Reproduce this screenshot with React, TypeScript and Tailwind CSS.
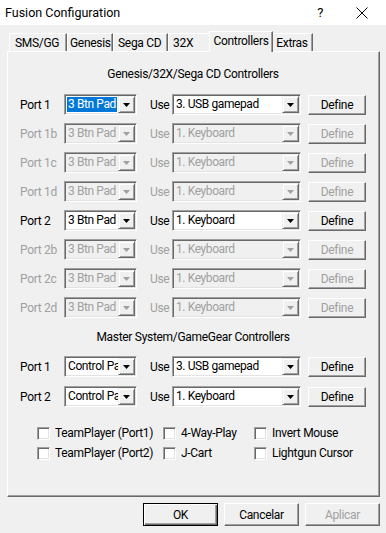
import React from "react";

const genesisPorts = [
  { label: "Port 1", pad: "3 Btn Pad", use: "3. USB gamepad", on: true, hl: true },
  { label: "Port 1b", pad: "3 Btn Pad", use: "1. Keyboard", on: false },
  { label: "Port 1c", pad: "3 Btn Pad", use: "1. Keyboard", on: false },
  { label: "Port 1d", pad: "3 Btn Pad", use: "1. Keyboard", on: false },
  { label: "Port 2", pad: "3 Btn Pad", use: "1. Keyboard", on: true },
  { label: "Port 2b", pad: "3 Btn Pad", use: "1. Keyboard", on: false },
  { label: "Port 2c", pad: "3 Btn Pad", use: "1. Keyboard", on: false },
  { label: "Port 2d", pad: "3 Btn Pad", use: "1. Keyboard", on: false },
];

const smsPorts = [
  { label: "Port 1", pad: "Control Pad", use: "3. USB gamepad", on: true },
  { label: "Port 2", pad: "Control Pad", use: "1. Keyboard", on: true },
];

const tabs = [
  { name: "SMS/GG", w: "w-[58px] pl-[5px]" },
  { name: "Genesis", w: "w-[46px] pl-[2px]" },
  { name: "Sega CD", w: "w-[55px] pl-[4px]" },
  { name: "32X", w: "w-[43px] pl-[4px]" },
];

function Arrow({ on }: { on: boolean }) {
  return (
    <svg width="7" height="4" viewBox="0 0 7 4">
      <path d="M0 0h7L3.5 4z" fill={on ? "#000" : "#a0a0a0"} />
    </svg>
  );
}

function Combo({
  w,
  text,
  on,
  hl,
}: {
  w: string;
  text: string;
  on: boolean;
  hl?: boolean;
}) {
  return (
    <div
      className={`flex h-[21px] ${w} border border-t-[#a0a0a0] border-l-[#a0a0a0] border-r-white border-b-white p-px shadow-[inset_1px_1px_0_#696969,inset_-1px_-1px_0_#e3e3e3] ${
        on ? "bg-white" : "bg-[#f0f0f0]"
      }`}
    >
      <div className="flex min-w-0 flex-1 items-center overflow-hidden pl-px">
        <span
          className={`whitespace-nowrap px-px leading-[15px] tracking-[-0.4px] ${
            hl ? "bg-[#0078d7] text-white" : on ? "text-black" : "text-[#a0a0a0]"
          }`}
        >
          {text}
        </span>
      </div>
      <div className="flex w-[17px] shrink-0 items-center justify-center border border-t-[#f0f0f0] border-l-[#f0f0f0] border-r-[#696969] border-b-[#696969] bg-[#f0f0f0] shadow-[inset_1px_1px_0_#fff,inset_-1px_-1px_0_#a0a0a0]">
        <Arrow on={on} />
      </div>
    </div>
  );
}

function Button({
  label,
  w,
  on = true,
  def = false,
}: {
  label: string;
  w: string;
  on?: boolean;
  def?: boolean;
}) {
  return (
    <div
      className={`flex ${w} items-center justify-center border bg-[#f0f0f0] ${
        def
          ? "border-[#000] shadow-[inset_1px_1px_0_#fff,inset_-1px_-1px_0_#696969,inset_-2px_-2px_0_#a0a0a0]"
          : "border-t-white border-l-white border-r-[#696969] border-b-[#696969] shadow-[inset_-1px_-1px_0_#a0a0a0]"
      } ${on ? "text-black" : "text-[#a0a0a0]"}`}
    >
      {label}
    </div>
  );
}

function PortRow({
  label,
  pad,
  use,
  on,
  hl,
}: {
  label: string;
  pad: string;
  use: string;
  on: boolean;
  hl?: boolean;
}) {
  const tc = on ? "text-black" : "text-[#a0a0a0]";
  return (
    <div className="flex h-[21px] items-center">
      <span className={`w-[44px] ${tc}`}>{label}</span>
      <Combo w="w-[73px]" text={pad} on={on} hl={hl} />
      <span className={`ml-[13px] w-[22px] ${tc}`}>Use</span>
      <Combo w="w-[129px]" text={use} on={on} />
      <div className="ml-[7px] flex h-[20px]">
        <Button label="Define" w="w-[58px]" on={on} />
      </div>
    </div>
  );
}

function Check({ label, w }: { label: string; w: string }) {
  return (
    <div className={`flex ${w} items-center gap-[5px]`}>
      <div className="h-[13px] w-[13px] border border-t-[#a0a0a0] border-l-[#a0a0a0] border-r-white border-b-white bg-white shadow-[inset_1px_1px_0_#696969,inset_-1px_-1px_0_#e3e3e3]" />
      <span>{label}</span>
    </div>
  );
}

export default function App() {
  return (
    <div
      className="h-[533px] w-[386px] overflow-hidden bg-[#f0f0f0] text-[12px] leading-[14px] tracking-[-0.3px] text-black"
      style={{ fontFamily: 'Roboto, "Liberation Sans", sans-serif' }}
    >
      {/* title bar */}
      <div className="flex h-[25px] items-center bg-white pl-[5px]">
        <span className="flex-1 text-[12.5px] tracking-normal">Fusion Configuration</span>
        <span className="mr-[33px] text-[13px]">?</span>
        <svg width="12" height="12" viewBox="0 0 12 12" className="mr-[18px]">
          <path d="M0.5 0.5l11 11M11.5 0.5l-11 11" stroke="#000" strokeWidth="1" />
        </svg>
      </div>

      <div className="ml-[7px] mt-[6px] w-[373px]">
        {/* tab strip */}
        <div className="flex h-[20px] items-end pl-[2px]">
          {tabs.map((t) => (
            <div
              key={t.name}
              className={`flex h-[18px] ${t.w} items-center whitespace-nowrap border border-b-0 border-t-white border-l-white border-r-[#696969] shadow-[inset_-1px_0_0_#a0a0a0]`}
            >
              {t.name}
            </div>
          ))}
          <div className="relative z-10 -mx-[2px] -mb-px flex h-[21px] w-[64px] items-start justify-center border border-b-0 border-t-white border-l-white border-r-[#696969] bg-[#f0f0f0] pt-[2px] shadow-[inset_-1px_0_0_#a0a0a0]">
            Controllers
          </div>
          <div className="flex h-[18px] w-[42px] items-center justify-center border border-b-0 border-t-white border-l-white border-r-[#696969] shadow-[inset_-1px_0_0_#a0a0a0]">
            Extras
          </div>
        </div>

        {/* panel */}
        <div className="flex h-[446px] flex-col border border-t-white border-l-white border-r-[#696969] border-b-[#696969] pl-[12px] pt-[15px] shadow-[inset_-1px_-1px_0_#a0a0a0]">
          <div className="w-[346px] text-center">Genesis/32X/Sega CD Controllers</div>
          <div className="mt-[13px] flex flex-col gap-[8px]">
            {genesisPorts.map((p) => (
              <PortRow key={p.label} {...p} />
            ))}
          </div>
          <div className="mt-[12px] w-[346px] text-center">Master System/GameGear Controllers</div>
          <div className="mt-[12px] flex flex-col gap-[9px]">
            {smsPorts.map((p) => (
              <PortRow key={p.label} {...p} />
            ))}
          </div>
          <div className="ml-[17px] mt-[19px] flex flex-col gap-[6px]">
            <div className="flex">
              <Check label="TeamPlayer (Port1)" w="w-[126px]" />
              <Check label="4-Way-Play" w="w-[91px]" />
              <Check label="Invert Mouse" w="w-[110px]" />
            </div>
            <div className="flex">
              <Check label="TeamPlayer (Port2)" w="w-[126px]" />
              <Check label="J-Cart" w="w-[91px]" />
              <Check label="Lightgun Cursor" w="w-[110px]" />
            </div>
          </div>
        </div>

        {/* dialog buttons */}
        <div className="mt-[6px] flex h-[23px] justify-end gap-[6px]">
          <Button label="OK" w="w-[75px]" def />
          <Button label="Cancelar" w="w-[75px]" />
          <Button label="Aplicar" w="w-[75px]" on={false} />
        </div>
      </div>
    </div>
  );
}
